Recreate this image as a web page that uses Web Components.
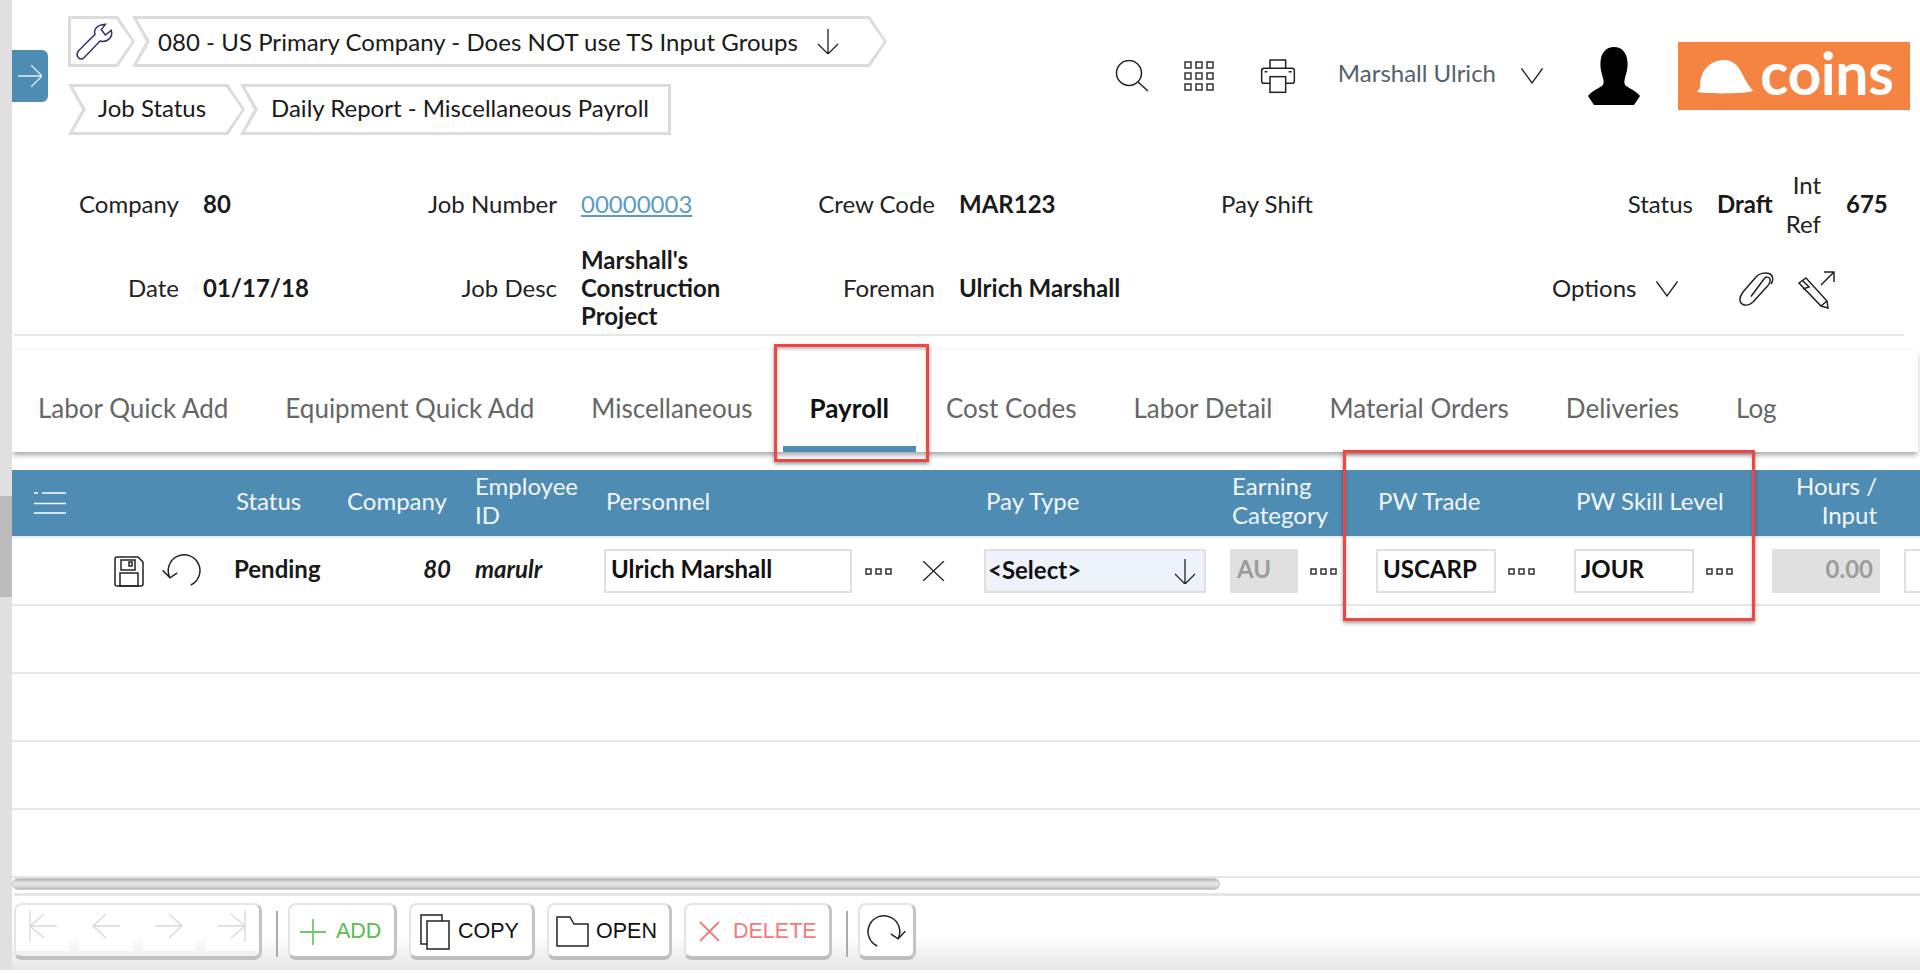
<!DOCTYPE html>
<html>
<head>
<meta charset="utf-8">
<title>Daily Report - Miscellaneous Payroll</title>
<style>
    html, body {
        margin: 0;
        background: #fff;
        font-family: Lato, "Open Sans", sans-serif;
        font-size: 24px;
        color: #222;
        overflow: hidden;
    }
</style>
</head>
<body>

<app-shell>
    <side-rail></side-rail>
    <app-main>
        <top-bar>
            <crumb-chip slot="first" kind="start" style="width:67px"><ui-icon name="wrench"></ui-icon></crumb-chip>
            <crumb-chip slot="first" pad="26px 48px 26px" gap="19px" style="letter-spacing:.04px">080 - US Primary Company - Does NOT use TS Input Groups <ui-icon name="arrow-down"></ui-icon></crumb-chip>
            <crumb-chip slot="second" pad="30px 40px" style="width:177px;margin-right:-5px;padding-bottom:4px">Job Status</crumb-chip>
            <crumb-chip slot="second" kind="end" pad="31px 23px" style="width:431px;padding-bottom:4px">Daily Report - Miscellaneous Payroll</crumb-chip>

            <ui-icon slot="tools" name="search" style="margin-right:35px"></ui-icon>
            <ui-icon slot="tools" name="apps" style="margin-right:45px"></ui-icon>
            <ui-icon slot="tools" name="printer" style="margin-right:42px"></ui-icon>
            <user-name slot="tools" style="margin-right:25px">Marshall Ulrich</user-name>
            <ui-icon slot="tools" name="chevron" style="margin-right:45px"></ui-icon>
            <ui-icon slot="tools" name="avatar" style="margin-right:38px"></ui-icon>
            <coins-logo slot="tools"></coins-logo>
        </top-bar>

        <info-panel>
            <info-label>Company</info-label><info-value>80</info-value>
            <info-label>Job Number</info-label><info-value link>00000003</info-value>
            <info-label>Crew Code</info-label><info-value>MAR123</info-value>
            <info-label>Pay Shift</info-label><info-value></info-value>
            <info-label>Status</info-label><info-value>Draft</info-value>
            <info-label tall>Int Ref</info-label><info-value>675</info-value>

            <info-label>Date</info-label><info-value>01/17/18</info-value>
            <info-label>Job Desc</info-label><info-value>Marshall's Construction Project</info-value>
            <info-label>Foreman</info-label><info-value>Ulrich Marshall</info-value>
            <info-label></info-label><info-value></info-value>
            <info-actions style="grid-column:span 4;margin-left:-1px">
                <span style="padding-bottom:2px">Options</span>
                <ui-icon name="chevron" style="margin-left:20px;margin-top:2px"></ui-icon>
                <ui-icon name="clip" style="margin-left:60px;margin-top:2px"></ui-icon>
                <ui-icon name="pencil" style="margin-left:23px;margin-top:4px"></ui-icon>
            </info-actions>
        </info-panel>
        <rule-line></rule-line>

        <tab-strip>
            <tab-item>Labor Quick Add</tab-item>
            <tab-item>Equipment Quick Add</tab-item>
            <tab-item>Miscellaneous</tab-item>
            <tab-item active>Payroll</tab-item>
            <tab-item>Cost Codes</tab-item>
            <tab-item>Labor Detail</tab-item>
            <tab-item>Material Orders</tab-item>
            <tab-item>Deliveries</tab-item>
            <tab-item>Log</tab-item>
        </tab-strip>

        <grid-row head>
            <grid-cell style="padding:0 0 0 22px"><ui-icon name="menu"></ui-icon></grid-cell>
            <grid-cell>Status</grid-cell>
            <grid-cell>Company</grid-cell>
            <grid-cell>Employee ID</grid-cell>
            <grid-cell style="padding-left:14px">Personnel</grid-cell>
            <grid-cell style="padding-left:14px">Pay Type</grid-cell>
            <grid-cell style="padding-left:14px">Earning Category</grid-cell>
            <grid-cell style="padding-left:14px">PW Trade</grid-cell>
            <grid-cell style="padding-left:14px">PW Skill Level</grid-cell>
            <grid-cell style="justify-content:flex-end;text-align:right;padding-right:15px">Hours / Input</grid-cell>
            <grid-cell></grid-cell>
        </grid-row>
        <grid-row>
            <grid-cell style="padding-left:102px"><ui-icon name="save"></ui-icon><ui-icon name="undo" style="margin-left:14px"></ui-icon></grid-cell>
            <grid-cell><strong-text style="margin-left:-2px">Pending</strong-text></grid-cell>
            <grid-cell style="justify-content:flex-end"><strong-text italic>80</strong-text></grid-cell>
            <grid-cell><strong-text italic>marulr</strong-text></grid-cell>
            <grid-cell>
                <text-field style="width:248px">Ulrich Marshall</text-field>
                <ui-icon name="dots" style="margin-left:13px"></ui-icon>
                <ui-icon name="close" style="margin-left:30px"></ui-icon>
            </grid-cell>
            <grid-cell><select-field style="width:222px">&lt;Select&gt;</select-field></grid-cell>
            <grid-cell>
                <text-field disabled style="width:68px">AU</text-field>
                <ui-icon name="dots" style="margin-left:12px"></ui-icon>
            </grid-cell>
            <grid-cell>
                <text-field style="width:120px">USCARP</text-field>
                <ui-icon name="dots" style="margin-left:12px"></ui-icon>
            </grid-cell>
            <grid-cell>
                <text-field style="width:120px">JOUR</text-field>
                <ui-icon name="dots" style="margin-left:12px"></ui-icon>
            </grid-cell>
            <grid-cell><text-field disabled number style="width:108px">0.00</text-field></grid-cell>
            <grid-cell><text-field style="width:60px"></text-field></grid-cell>
        </grid-row>
        <grid-row></grid-row>
        <grid-row></grid-row>
        <grid-row></grid-row>
        <grid-row></grid-row>

        <h-scroll></h-scroll>
        <rule-line style="margin-top:3px;margin-right:0;height:3px"></rule-line>

        <tool-bar>
            <nav-group>
                <nav-cell><ui-icon name="first"></ui-icon></nav-cell>
                <nav-cell><ui-icon name="prev"></ui-icon></nav-cell>
                <nav-cell><ui-icon name="next"></ui-icon></nav-cell>
                <nav-cell><ui-icon name="last"></ui-icon></nav-cell>
            </nav-group>
            <tool-sep></tool-sep>
            <tool-button style="width:109px;padding-left:10px;color:#58bd4e"><ui-icon name="plus"></ui-icon><span style="margin-left:10px">ADD</span></tool-button>
            <tool-button style="width:126px;padding-left:9px;margin-left:12px"><ui-icon name="copy"></ui-icon><span style="margin-left:8px">COPY</span></tool-button>
            <tool-button style="width:125px;padding-left:7px;margin-left:12px"><ui-icon name="folder"></ui-icon><span style="margin-left:7px">OPEN</span></tool-button>
            <tool-button style="width:148px;padding-left:13px;margin-left:12px;color:#f47a7a"><ui-icon name="remove"></ui-icon><span style="margin-left:13px">DELETE</span></tool-button>
            <tool-sep></tool-sep>
            <tool-button style="width:58px;padding-left:3px"><ui-icon name="redo"></ui-icon></tool-button>
        </tool-bar>
    </app-main>

    <note-box style="left:774px;top:344px;width:155px;height:118px"></note-box>
    <note-box style="left:1343px;top:450px;width:412px;height:171px"></note-box>

    <side-tab></side-tab>
</app-shell>

<script>

// every icon is drawn at its real pixel size, so w/h are also the box in the layout
const ICONS = {
    'wrench': { w: 40, h: 40, vb: '220 35 120 120', sw: 4.5, color: '#3d2c6b', body: `<path d="M233 122L283 72C278 58 288 44 314 42L302 58L314 74L332 60C338 82 318 98 298 92L250 142C240 152 222 140 233 122Z"/>` },
    'arrow-down': { w: 22, h: 25, vb: '0 0 22 25', sw: 1.3, body: `<path d="M11 0V25M1 15L11 25L21 15"/>` },
    'arrow-right': { w: 24, h: 22, vb: '0 0 24 22', sw: 1.3, color: '#e4eef5', body: `<path d="M0 11H23.5M13 0L24 11L13 22"/>` },
    'chevron': { w: 22, h: 16, vb: '0 0 22 16', sw: 1.3, body: `<path d="M.5 .5L11 15L21.5 .5"/>` },
    'search': { w: 34, h: 32, vb: '0 0 34 32', sw: 1.5, body: `<circle cx="14" cy="13" r="12.5"/><path d="M23 22L33 31"/>` },
    'apps': { w: 31, h: 31, vb: '0 0 31 31', sw: 1.5, color: '#333', body: [1, 12, 23].map(y => [1, 12, 23].map(x => `<rect x="${x}" y="${y}" width="6" height="6"/>`).join('')).join('') },
    'printer': { w: 36, h: 36, vb: '478 54 108 108', sw: 4.5, body: `<path d="M508 85V60H555V85"/><path d="M508 130H490Q483 130 483 123V92Q483 85 490 85H574Q581 85 581 92V123Q581 130 574 130H555"/><rect x="508" y="110" width="47" height="47"/><path d="M492 95H500M564 95H573"/>` },
    'avatar': { w: 52, h: 58, vb: '0 0 52 58', fill: '#000', blur: true, body: `<path d="M26 0C34 0 39 6 39.5 15C40 22 38 27 37 31C36 35 36 37 38 39C43 42 48 44 52 49L46 58H6L0 49C4 44 9 42 14 39C16 37 16 35 15 31C14 27 12 22 12.5 15C13 6 18 0 26 0Z"/>` },
    'clip': { w: 36, h: 34, vb: '0 0 36 34', sw: 1.5, body: `<path d="M13 24.5L26 7C28 4 31.5 5 32 7C32.5 9 32 11 30 13.5L15 30C11 34 5 34 3 31C1 28 2 24 5 20L18 5C21 1.500 27 0 31 1.500C35 3 36 8 33 12"/>` },
    'pencil': { w: 38, h: 38, vb: '0 0 38 38', sw: 1.5, body: `<path d="M2 12L9 7L30 30L31 37L24 35ZM5 9L12 16L6 18M24 35L30 30M24 14L37 1M27 1H37V11"/>` },
    'menu': { w: 32, h: 22, vb: '0 0 32 22', sw: 1.6, color: '#fff', body: `<path d="M0 1H4M8 1H32M0 11.500H32M0 21H32"/>` },
    'save': { w: 30, h: 31, vb: '0 0 30 31', sw: 1.5, color: '#222', body: `<path d="M1 3Q1 1 3 1H24L29 6V28Q29 30 27 30H3Q1 30 1 28Z"/><rect x="7" y="4" width="14" height="10"/><rect x="15" y="6" width="3" height="4"/><rect x="6" y="17" width="18" height="13"/>` },
    'undo': { w: 47, h: 38, vb: '1030 100 140 115', sw: 4.5, flip: true, body: `<path d="M1072 200A48 48 0 1 1 1135 178M1113 163L1135 178L1157 155"/>` },
    'redo': { w: 47, h: 38, vb: '1030 100 140 115', sw: 4.5, body: `<path d="M1072 200A48 48 0 1 1 1135 178M1113 163L1135 178L1157 155"/>` },
    'dots': { w: 27, h: 7, vb: '0 0 27 7', sw: 1.5, color: '#333', body: `<rect x="1" y="1" width="5" height="5"/><rect x="11" y="1" width="5" height="5"/><rect x="21" y="1" width="5" height="5"/>` },
    'close': { w: 23, h: 20, vb: '0 0 23 20', sw: 1.3, body: `<path d="M1 0L22 20M22 0L1 20"/>` },
    'first': { w: 28, h: 32, vb: '0 0 28 32', sw: 1.3, color: '#d8d8d8', body: `<path d="M1 0V32M1 16H28M15 4L1 16L15 28"/>` },
    'prev': { w: 28, h: 26, vb: '0 0 28 26', sw: 1.3, color: '#d8d8d8', body: `<path d="M1 13H28M14 1L1 13L14 25"/>` },
    'next': { w: 28, h: 26, vb: '0 0 28 26', sw: 1.3, color: '#d8d8d8', body: `<path d="M0 13H27M14 1L27 13L14 25"/>` },
    'last': { w: 28, h: 32, vb: '0 0 28 32', sw: 1.3, color: '#d8d8d8', body: `<path d="M27 0V32M0 16H27M13 4L27 16L13 28"/>` },
    'plus': { w: 26, h: 26, vb: '0 0 26 26', sw: 1.8, color: '#6fc96f', body: `<path d="M13 0V26M0 13H26"/>` },
    'copy': { w: 30, h: 36, vb: '0 0 30 36', sw: 1.5, color: '#222', body: `<rect x="1" y="1" width="21" height="29" fill="#fff"/><rect x="7" y="7" width="22" height="28" fill="#fff"/>` },
    'folder': { w: 33, h: 31, vb: '0 0 33 31', sw: 1.5, color: '#222', body: `<path d="M1 1H14L18 8H32V30H1Z"/>` },
    'remove': { w: 21, h: 21, vb: '0 0 21 21', sw: 1.8, color: '#f47a7a', body: `<path d="M1 1L20 20M20 1L1 20"/>` }
};

class UiIcon extends HTMLElement {

    constructor() {
        super();
        this.attachShadow({ mode: 'open' });
    }

    connectedCallback() {
        const icon = ICONS[this.getAttribute('name')];
        this.shadowRoot.innerHTML = `
        <style>
        :host { display: inline-flex; flex: none; color: ${icon.color || '#222'}; line-height: 0; }
        svg { display: block; ${icon.flip ? 'transform: scaleX(-1);' : ''} ${icon.blur ? 'filter: blur(.5px);' : ''} }
        </style>
        <svg width="${icon.w}" height="${icon.h}" viewBox="${icon.vb}" fill="${icon.fill || 'none'}"
            stroke="${icon.fill ? 'none' : 'currentColor'}" stroke-width="${icon.sw || 0}">${icon.body}</svg>`;
    }
}
customElements.define('ui-icon', UiIcon);

// small helper for elements that are only a style and a slot
function simple(tag, css, markup = '<slot></slot>') {
    customElements.define(tag, class extends HTMLElement {
        constructor() {
            super();
            this.attachShadow({ mode: 'open' }).innerHTML = `<style>${css}</style>${markup}`;
        }
    });
}

simple('app-shell', `
    :host { display: flex; position: relative; height: 973px; overflow: hidden; }
`);

simple('side-rail', `
    :host { display: block; flex: none; width: 12px; height: 970px; background: #e0e0e0; position: relative; }
    div { position: absolute; left: 0; right: 0; top: 496px; height: 101px; background: #bcbcbc; }
`, '<div></div>');

simple('app-main', `
    :host { display: block; flex: none; width: 1908px; }
`);

simple('side-tab', `
    :host { position: absolute; left: 12px; top: 50px; width: 36px; height: 52px; background: #4f8cb3;
        border-radius: 0 6px 6px 0; display: flex; align-items: center; justify-content: center; }
`, '<ui-icon name="arrow-right"></ui-icon>');

simple('note-box', `
    :host { position: absolute; box-sizing: border-box; border: 3px solid #f04545; pointer-events: none;
        box-shadow: 0 2px 4px rgba(0,0,0,.4), inset 0 2px 3px rgba(0,0,0,.25); }
`, '');

simple('top-bar', `
    :host { display: flex; height: 140px; box-sizing: border-box; }
    .trail { padding: 16px 0 0 56px; display: flex; flex-direction: column; gap: 17px; }
    .row { display: flex; }
    .tools { margin-left: auto; padding: 42px 10px 0 0; height: 68px; display: flex; align-items: center; }
`, `
    <div class="trail">
        <div class="row"><slot name="first"></slot></div>
        <div class="row"><slot name="second"></slot></div>
    </div>
    <div class="tools"><slot name="tools"></slot></div>
`);

class CrumbChip extends HTMLElement {

    constructor() {
        super();
        this.attachShadow({ mode: 'open' });
    }

    connectedCallback() {
        const kind = this.getAttribute('kind');
        const pad = (this.getAttribute('pad') || '0 0').split(' ');
        const start = kind === 'start';
        const end = kind === 'end';

        const outer = start
            ? 'polygon(0 0, calc(100% - 17px) 0, 100% 50%, calc(100% - 17px) 100%, 0 100%)'
            : end
            ? 'polygon(0 0, 100% 0, 100% 100%, 0 100%, 14px 50%)'
            : 'polygon(0 0, calc(100% - 17px) 0, 100% 50%, calc(100% - 17px) 100%, 0 100%, 14px 50%)';

        const inner = start
            ? 'polygon(3px 3px, calc(100% - 19px) 3px, calc(100% - 3px) 50%, calc(100% - 19px) calc(100% - 3px), 3px calc(100% - 3px))'
            : end
            ? 'polygon(5px 3px, calc(100% - 3px) 3px, calc(100% - 3px) calc(100% - 3px), 5px calc(100% - 3px), 18px 50%)'
            : 'polygon(5px 3px, calc(100% - 19px) 3px, calc(100% - 3px) 50%, calc(100% - 19px) calc(100% - 3px), 5px calc(100% - 3px), 18px 50%)';

        this.shadowRoot.innerHTML = `
        <style>
        :host {
            display: inline-flex;
            align-items: center;
            box-sizing: border-box;
            position: relative;
            flex: none;
            height: 51px;
            margin-right: -3px;
            padding: 0 ${pad[1]} 0 ${pad[0]};
            gap: ${this.getAttribute('gap') || '0'};
            background: #dcdcdc;
            clip-path: ${outer};
            white-space: nowrap;
            color: #1a1a1a;
        }
        :host::before {
            content: '';
            position: absolute;
            inset: 0;
            background: #fff;
            clip-path: ${inner};
        }
        .content { position: relative; display: inline-flex; align-items: center; gap: inherit; padding-left: ${start ? '6px' : '0'}; }
        </style>
        <span class="content"><slot></slot></span>`;
    }
}
customElements.define('crumb-chip', CrumbChip);

simple('user-name', `
    :host { display: block; color: #52616e; white-space: nowrap; position: relative; top: -4px; }
`);

simple('coins-logo', `
    :host { display: flex; align-items: center; box-sizing: border-box; width: 232px; height: 68px; padding-left: 19px;
        background: #f58442; color: #fff; }
    svg { display: block; flex: none; margin-top: 1px; }
    span { margin-left: 7px; font-size: 59px; font-weight: 700; line-height: 68px; position: relative; top: -3px; letter-spacing: -.5px; }
`, `
    <svg width="56" height="34" viewBox="0 0 56 34" fill="#fff"><path d="M0 32C1 30 3 29 3 27C3 12 10 2 25 0C33 -1 40 4 43 10C47 17 50 24 56 31C50 34 8 34 0 32Z"/></svg>
    <span>coins</span>
`);

simple('info-panel', `
    :host {
        display: grid;
        grid-template-columns: 167px 201px 177px 203px 175px 205px 173px 240px 140px 94px 35px 1fr;
        grid-template-rows: 78px 84px;
        row-gap: 3px;
        padding: 25px 0 4px;
    }
`);

simple('info-label', `
    :host { display: flex; align-items: center; justify-content: flex-end; text-align: right; line-height: 28px; color: #222; }
    :host([tall]) { line-height: 39px; padding-bottom: 1px; margin-right: 1px; }
`);

class InfoValue extends HTMLElement {

    constructor() {
        super();
        this.attachShadow({ mode: 'open' }).innerHTML = `
        <style>
        :host { display: flex; align-items: center; padding-left: 24px; line-height: 28px; font-weight: 700; color: #1a1a1a; }
        :host([link]) { color: #5b9cc4; text-decoration: underline; font-weight: 400; }
        </style>
        <div><slot></slot></div>`;
    }
}
customElements.define('info-value', InfoValue);

simple('info-actions', `
    :host { display: flex; align-items: center; color: #222; }
`);

simple('rule-line', `
    :host { display: block; height: 2px; margin: 0 16px 0 2px; background: #e6e6e6; }
`, '');

simple('tab-strip', `
    :host { display: flex; align-items: center; gap: 57px; box-sizing: border-box; height: 102px; margin: 14px 2px 18px 0;
        padding: 13px 0 0 26px; background: #fff; font-size: 26px; box-shadow: 0 4px 5px -1px rgba(0,0,0,.35), 0 -2px 4px rgba(0,0,0,.03); }
`);

simple('tab-item', `
    :host { display: block; position: relative; color: #666; white-space: nowrap; }
    :host([active]) { color: #111; font-weight: 700; }
    :host([active])::after { content: ''; position: absolute; left: -27px; right: -27px; bottom: -28px; height: 6px; background: #4f8cb3; }
`);

simple('grid-row', `
    :host {
        display: grid;
        grid-template-columns: 212px 111px 128px 129px 380px 246px 146px 198px 198px 132px 28px;
        box-sizing: border-box;
        height: 68px;
        border-bottom: 2px solid #e6e6e6;
        overflow: hidden;
        font-weight: 400;
    }
    :host([head]) {
        background: #4f8cb3;
        color: #f2f6f9;
        border-bottom-color: #e8eef2;
        line-height: 29px;
        --cell-bottom: 6px;
    }
`);

simple('grid-cell', `
    :host { display: flex; align-items: center; box-sizing: border-box; padding: 0 12px var(--cell-bottom, 0); min-width: 0; }
`);

simple('strong-text', `
    :host { display: block; padding-bottom: 5px; font-weight: 700; color: #1a1a1a; white-space: nowrap; }
    :host([italic]) { font-style: italic; }
`);

simple('text-field', `
    :host { display: flex; align-items: center; flex: none; box-sizing: border-box; height: 44px; padding: 0 5px 5px;
        border: 2px solid #e0e0e0; background: #fff; font-weight: 700; color: #111; white-space: nowrap; }
    :host([disabled]) { background: #e0e0e0; color: #9c9c9c; }
    :host([number]) { justify-content: flex-end; }
`);

simple('select-field', `
    :host { display: flex; align-items: center; justify-content: space-between; flex: none; box-sizing: border-box; height: 44px;
        padding: 0 8px 0 2px; border: 2px solid #e0e0e0; background: #eef3fb; font-weight: 700; color: #111; }
    span { padding-bottom: 3px; }
`, '<span><slot></slot></span><ui-icon name="arrow-down"></ui-icon>');

simple('h-scroll', `
    :host { display: block; height: 12px; }
    div { width: 1208px; height: 12px; box-sizing: border-box; border-radius: 6px; border: 1px solid #c8c8c8;
        background: linear-gradient(#b4b4b4, #e2e2e2 35%, #e2e2e2 65%, #bcbcbc); }
`, '<div></div>');

simple('tool-bar', `
    :host { display: flex; align-items: flex-start; box-sizing: border-box; height: 74px; padding: 7px 0 0 2px;
        background: linear-gradient(#fff 52%, #e6e6e6 100%); }
`);

simple('nav-group', `
    :host { display: flex; gap: 10px; flex: none; box-sizing: border-box; width: 248px; height: 57px;
        border-style: solid; border-width: 2px 3px 4px 2px; border-color: #e4e4e4 #c4c4c4 #bfbfbf #e4e4e4; border-radius: 8px; }
`);

simple('nav-cell', `
    :host { display: flex; flex: 1; align-items: center; justify-content: center; height: 46px; padding-bottom: 5px;
        box-sizing: border-box; background: #fff; border-radius: 6px 6px 0 0; }
`);

simple('tool-sep', `
    :host { display: block; flex: none; width: 2px; height: 46px; margin: 8px 10px 0 14px; background: #ababab; }
`, '');

simple('tool-button', `
    :host { display: flex; align-items: center; flex: none; box-sizing: border-box; height: 57px; padding-top: 2px;
        border-style: solid; border-width: 2px 3px 4px 2px; border-color: #e4e4e4 #c4c4c4 #bfbfbf #e4e4e4; border-radius: 8px;
        background: #fff; font-family: "Liberation Sans", Arial, sans-serif; font-size: 21.5px; color: #111; white-space: nowrap; }
`);

</script>
</body>
</html>
